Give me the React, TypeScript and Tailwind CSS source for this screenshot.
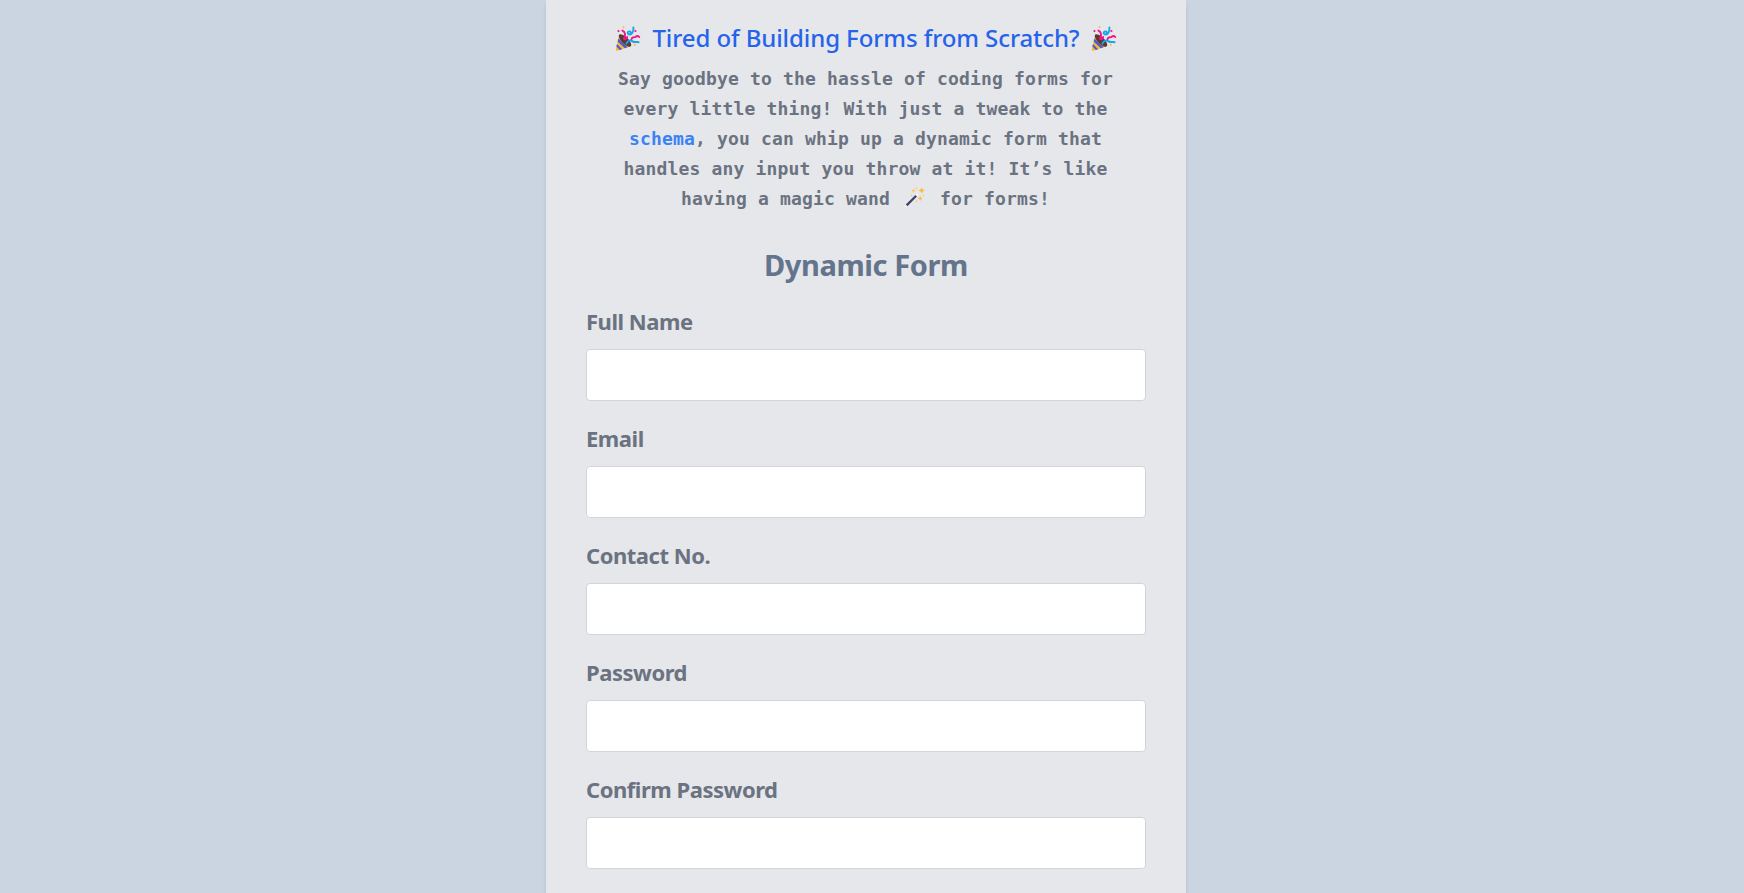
import type { ReactNode } from "react";

const fields = [
  { name: "fullName", label: "Full Name", type: "text" },
  { name: "email", label: "Email", type: "email" },
  { name: "contact", label: "Contact No.", type: "tel" },
  { name: "password", label: "Password", type: "password" },
  { name: "confirmPassword", label: "Confirm Password", type: "password" },
];

function PartyPopper() {
  return (
    <svg viewBox="0 0 26 26" className="mt-0.5 h-[26px] w-[26px] shrink-0" fill="none" aria-hidden="true">
      <path d="M4.2 9 L15.6 20.2 L2.6 24.8 Q0.4 25.2 0.9 23 Z" fill="#fcb92c" />
      <path d="M3.4 12.4 L12.6 21.3 L9.8 22.3 L2.6 15.4 Z" fill="#4d5bd8" />
      <path d="M2 18 L7.1 23.2 L4.8 24 L1.4 20.6 Z" fill="#4d5bd8" />
      <ellipse cx="10" cy="14.4" rx="8.2" ry="3.3" transform="rotate(45 10 14.4)" fill="#5c3a31" />
      <path d="M7.4 4.6 C10.6 6 10.6 9 9 12.6 C9.8 14 11.8 13.2 12.2 11" stroke="#f5148c" strokeWidth="1.9" strokeLinecap="round" />
      <path d="M18.4 1.4 C18.8 5.4 17 8.8 14.4 8.6 C11.6 8 12.6 5 14.8 5.4 C16.6 6 15.6 8 14.6 8.6" stroke="#14a8e6" strokeWidth="1.9" strokeLinecap="round" />
      <path d="M16.4 13.4 C17 10.4 19.4 12 20.8 10.8 C22 9.6 23.4 10 24.2 11" stroke="#f5148c" strokeWidth="2" strokeLinecap="round" />
      <path d="M11.4 17.6 C13 13.8 16 14.2 17.6 15.4 C19.6 17 21.4 15.4 23.6 16.2" stroke="#14a8e6" strokeWidth="2" strokeLinecap="round" />
      <circle cx="3.5" cy="5.1" r="1.1" fill="#f5148c" />
      <circle cx="20.4" cy="5" r="1.1" fill="#f5148c" />
      <circle cx="8.6" cy="1" r="0.9" fill="#fcb92c" />
      <circle cx="19.8" cy="18.8" r="1" fill="#fcb92c" />
    </svg>
  );
}

function MagicWand() {
  return (
    <svg viewBox="0 0 22 22" className="mx-[3px] inline-block h-[22px] w-[22px] align-[-4px]" aria-hidden="true">
      <path d="M1.9 19.1 L13.3 7.7" stroke="#ffffff" strokeWidth="1.8" strokeLinecap="round" />
      <path d="M2.6 18.4 L12.2 8.8" stroke="#433b6b" strokeWidth="2.2" />
      <path d="M17.7 0.4 L18.7 2.5 L20.8 3.5 L18.7 4.5 L17.7 6.6 L16.7 4.5 L14.6 3.5 L16.7 2.5 Z" fill="#ffb92e" />
      <path d="M16.2 9.1 L17 10.7 L18.6 11.5 L17 12.3 L16.2 13.9 L15.4 12.3 L13.8 11.5 L15.4 10.7 Z" fill="#ffb92e" />
      <path d="M9.4 1.6 L10.1 3.1 L11.6 3.8 L10.1 4.5 L9.4 6 L8.7 4.5 L7.2 3.8 L8.7 3.1 Z" fill="#ffc95c" />
      <circle cx="12.4" cy="1.4" r="0.9" fill="#ffc95c" />
      <circle cx="7.4" cy="8.4" r="0.8" fill="#ffc95c" />
      <circle cx="19.4" cy="8.4" r="0.8" fill="#ffc95c" />
      <circle cx="12.4" cy="14.4" r="0.8" fill="#ffc95c" />
    </svg>
  );
}

function Line({ children }: { children: ReactNode }) {
  return <span className="block whitespace-pre">{children}</span>;
}

export default function App() {
  return (
    <div className="flex h-[893px] justify-center overflow-hidden bg-[#cbd5e1] pr-3 font-['Noto_Sans','Open_Sans',sans-serif]">
      <main className="h-[920px] w-[640px] bg-[#e5e7eb] px-10 pt-[22px] shadow-md">
        <h1 className="flex h-8 items-center justify-center gap-[11px] whitespace-nowrap text-2xl leading-8 font-medium tracking-[-0.09px] text-[#2563eb]">
          <PartyPopper />
          <span>Tired of Building Forms from Scratch?</span>
          <PartyPopper />
        </h1>
        <p className="mt-2.5 pr-px text-center font-['DejaVu_Sans_Mono',monospace] text-[18px] leading-[30px] font-bold tracking-[0.164px] text-[#6b7280]">
          <Line>Say goodbye to the hassle of coding forms for</Line>
          <Line>every little thing! With just a tweak to the</Line>
          <Line>
            <a className="text-[#3b82f6]">schema</a>, you can whip up a dynamic form that
          </Line>
          <Line>handles any input you throw at it! It’s like</Line>
          <Line>
            having a magic wand <MagicWand /> for forms!
          </Line>
        </p>
        <h2 className="mt-[31px] text-center text-[29px] leading-10 font-bold tracking-[-0.4px] text-[#64748b]">
          Dynamic Form
        </h2>
        <form className="mt-5 flex flex-col gap-[21px]">
          {fields.map((field) => (
            <div key={field.name}>
              <label
                htmlFor={field.name}
                className="mb-3 block text-[22px] leading-8 font-bold tracking-[-0.47px] text-[#6b7280]"
              >
                {field.label}
              </label>
              <input
                id={field.name}
                type={field.type}
                className="block h-[52px] w-full rounded border border-[#d1d5db] bg-white px-3 outline-none"
              />
            </div>
          ))}
        </form>
      </main>
    </div>
  );
}
